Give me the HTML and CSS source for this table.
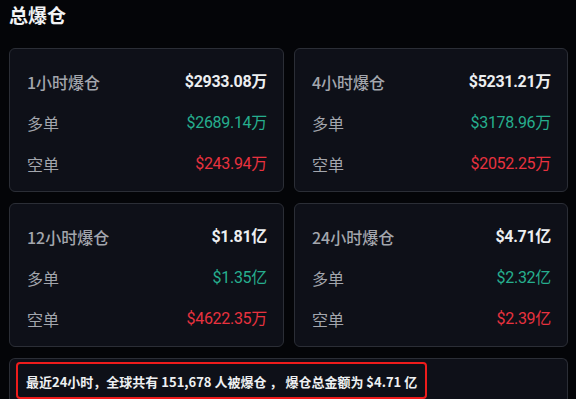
FILE: index.html
```html
<!DOCTYPE html>
<html lang="zh-CN">
<head>
<meta charset="utf-8">
<link rel="stylesheet" href="styles.css">
</head>
<body>
<div class="page">
  <h1 class="title">总爆仓</h1>
  <div class="grid">
    <div class="card">
      <div class="row head"><span class="label">1小时爆仓</span><span class="val">$2933.08万</span></div>
      <div class="row"><span class="label">多单</span><span class="val up">$2689.14万</span></div>
      <div class="row"><span class="label">空单</span><span class="val down">$243.94万</span></div>
    </div>
    <div class="card">
      <div class="row head"><span class="label">4小时爆仓</span><span class="val">$5231.21万</span></div>
      <div class="row"><span class="label">多单</span><span class="val up">$3178.96万</span></div>
      <div class="row"><span class="label">空单</span><span class="val down">$2052.25万</span></div>
    </div>
    <div class="card">
      <div class="row head"><span class="label">12小时爆仓</span><span class="val">$1.81亿</span></div>
      <div class="row"><span class="label">多单</span><span class="val up">$1.35亿</span></div>
      <div class="row"><span class="label">空单</span><span class="val down">$4622.35万</span></div>
    </div>
    <div class="card">
      <div class="row head"><span class="label">24小时爆仓</span><span class="val">$4.71亿</span></div>
      <div class="row"><span class="label">多单</span><span class="val up">$2.32亿</span></div>
      <div class="row"><span class="label">空单</span><span class="val down">$2.39亿</span></div>
    </div>
  </div>
  <div class="summary">
    <div class="note">最近24小时，全球共有 151,678 人被爆仓 ， 爆仓总金额为 $4.71 亿</div>
  </div>
</div>
</body>
</html>
```
FILE: styles.css
```css
html, body {
  margin: 0;
  padding: 0;
  background: #040508;
  height: 399px;
  overflow: hidden;
}
.page {
  padding: 0 8px 0 9px;
  font-family: "Noto Sans CJK SC", "Noto Sans", sans-serif;
}
.title {
  margin: 0;
  height: 48px;
  padding-top: 2px;
  box-sizing: border-box;
  font-size: 19px;
  line-height: 26px;
  font-weight: 700;
  color: #f2f3f5;
}
.grid {
  display: grid;
  grid-template-columns: 275px 274px;
  column-gap: 10px;
  row-gap: 11px;
}
.card {
  background: #0e1018;
  border: 1px solid #2b2e36;
  border-radius: 6px;
  padding: 21px 16px 15px 17px;
  display: flex;
  flex-direction: column;
  gap: 17px;
}
.row {
  display: flex;
  justify-content: space-between;
  align-items: center;
  height: 24px;
  font-size: 16px;
  line-height: 24px;
}
.label {
  color: #a3a6ad;
}
.head .label {
  font-weight: 500;
}
.val {
  font-family: "Roboto", "Noto Sans CJK SC", sans-serif;
  letter-spacing: -0.3px;
  color: #9aa0a6;
}
.head .val {
  color: #eceef0;
  font-weight: 700;
}
.val.up {
  color: #26ae8e;
}
.val.down {
  color: #e8323f;
}
.summary {
  margin-top: 11px;
  background: #0e1018;
  border: 1px solid #2b2e36;
  border-bottom: none;
  border-radius: 6px 6px 0 0;
  padding: 3px 0 0 6px;
  height: 37px;
}
.note {
  display: inline-block;
  border: 2px solid #ee1c1c;
  border-radius: 4px;
  padding: 8px 8px 6px 8px;
  font-size: 13px;
  line-height: 19px;
  font-weight: 700;
  color: #eef0f2;
}
```
